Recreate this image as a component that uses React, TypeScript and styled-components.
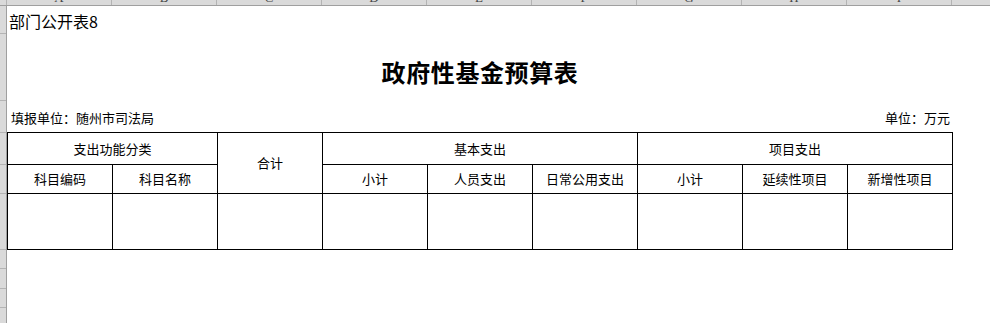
import React from "react";
import styled, { createGlobalStyle } from "styled-components";

const GlobalStyle = createGlobalStyle`
  html, body { margin: 0; padding: 0; background: #ffffff; overflow: hidden; }
  body { font-family: "Noto Sans CJK SC", "Noto Sans", sans-serif; color: #000; }
`;

const Sheet = styled.div`
  display: flex;
  flex-direction: column;
  width: 990px;
  height: 323px;
  overflow: hidden;
  background: #fff;
`;

const ColumnHeader = styled.div`
  display: flex;
  height: 6px;
  box-sizing: border-box;
  background: #dadada;
  border-bottom: 1px solid #9f9f9f;
  overflow: hidden;
  flex: none;
`;

const Corner = styled.div`
  width: 7px;
  flex: none;
  box-sizing: border-box;
  border-right: 1px solid #b4b4b4;
`;

const ColLetter = styled.div`
  width: 105px;
  flex: none;
  box-sizing: border-box;
  border-right: 1px solid #b4b4b4;
  overflow: hidden;
  text-align: center;
  font-family: "Liberation Serif", serif;
  font-size: 13px;
  line-height: 14px;
  color: #444;
  & > span { display: block; margin-top: -9px; }
`;

const Body = styled.div`
  display: flex;
  flex: 1;
  min-height: 0;
`;

const RowHeader = styled.div`
  display: flex;
  flex-direction: column;
  width: 7px;
  flex: none;
  background: #dadada;
  box-sizing: border-box;
  border-right: 1px solid #9f9f9f;
`;

const RowNum = styled.div<{ $h: number }>`
  height: ${(p) => p.$h}px;
  flex: none;
  box-sizing: border-box;
  border-bottom: 1px solid #b4b4b4;
`;

const Content = styled.div`
  display: flex;
  flex-direction: column;
  flex: 1;
`;

const NoteRow = styled.div`
  height: 27px;
  display: flex;
  align-items: flex-end;
  padding: 0 0 2px 2px;
  box-sizing: border-box;
  font-size: 16px;
  line-height: 20px;
`;

const TitleRow = styled.div`
  height: 67px;
  width: 946px;
  display: flex;
  justify-content: center;
  align-items: center;
  padding-top: 9px;
  box-sizing: border-box;
  font-size: 24px;
  font-weight: 700;
  letter-spacing: 0.6px;
`;

const UnitRow = styled.div`
  height: 32px;
  width: 946px;
  display: flex;
  justify-content: space-between;
  align-items: center;
  padding: 2px 3px 0 4px;
  box-sizing: border-box;
  font-size: 13px;
`;

const Grid = styled.div`
  display: grid;
  grid-template-columns: repeat(9, 105px);
  grid-template-rows: 32px 29px 56px;
  width: max-content;
  border-left: 1px solid #000;
  border-top: 1px solid #000;
`;

const Cell = styled.div<{ $col: string; $row: string }>`
  grid-column: ${(p) => p.$col};
  grid-row: ${(p) => p.$row};
  box-sizing: border-box;
  border-right: 1px solid #000;
  border-bottom: 1px solid #000;
  display: flex;
  align-items: center;
  justify-content: center;
  font-size: 13px;
  line-height: 16px;
`;

const letters = ["A", "B", "C", "D", "E", "F", "G", "H", "I", "J"];
const rowHeights = [28, 67, 32, 32, 29, 56, 19, 20, 19, 19];

const headerCells: { text: string; col: string; row: string }[] = [
  { text: "支出功能分类", col: "1 / 3", row: "1" },
  { text: "合计", col: "3", row: "1 / 3" },
  { text: "基本支出", col: "4 / 7", row: "1" },
  { text: "项目支出", col: "7 / 10", row: "1" },
  { text: "科目编码", col: "1", row: "2" },
  { text: "科目名称", col: "2", row: "2" },
  { text: "小计", col: "4", row: "2" },
  { text: "人员支出", col: "5", row: "2" },
  { text: "日常公用支出", col: "6", row: "2" },
  { text: "小计", col: "7", row: "2" },
  { text: "延续性项目", col: "8", row: "2" },
  { text: "新增性项目", col: "9", row: "2" },
];

export default function App() {
  return (
    <>
      <GlobalStyle />
      <Sheet>
        <ColumnHeader>
          <Corner />
          {letters.map((l) => (
            <ColLetter key={l}>
              <span>{l}</span>
            </ColLetter>
          ))}
        </ColumnHeader>
        <Body>
          <RowHeader>
            {rowHeights.map((h, i) => (
              <RowNum key={i} $h={h} />
            ))}
          </RowHeader>
          <Content>
            <NoteRow>部门公开表8</NoteRow>
            <TitleRow>政府性基金预算表</TitleRow>
            <UnitRow>
              <span>填报单位：随州市司法局</span>
              <span>单位：万元</span>
            </UnitRow>
            <Grid>
              {headerCells.map((c, i) => (
                <Cell key={i} $col={c.col} $row={c.row}>
                  {c.text}
                </Cell>
              ))}
              {Array.from({ length: 9 }, (_, i) => (
                <Cell key={`d${i}`} $col={String(i + 1)} $row="3" />
              ))}
            </Grid>
          </Content>
        </Body>
      </Sheet>
    </>
  );
}
